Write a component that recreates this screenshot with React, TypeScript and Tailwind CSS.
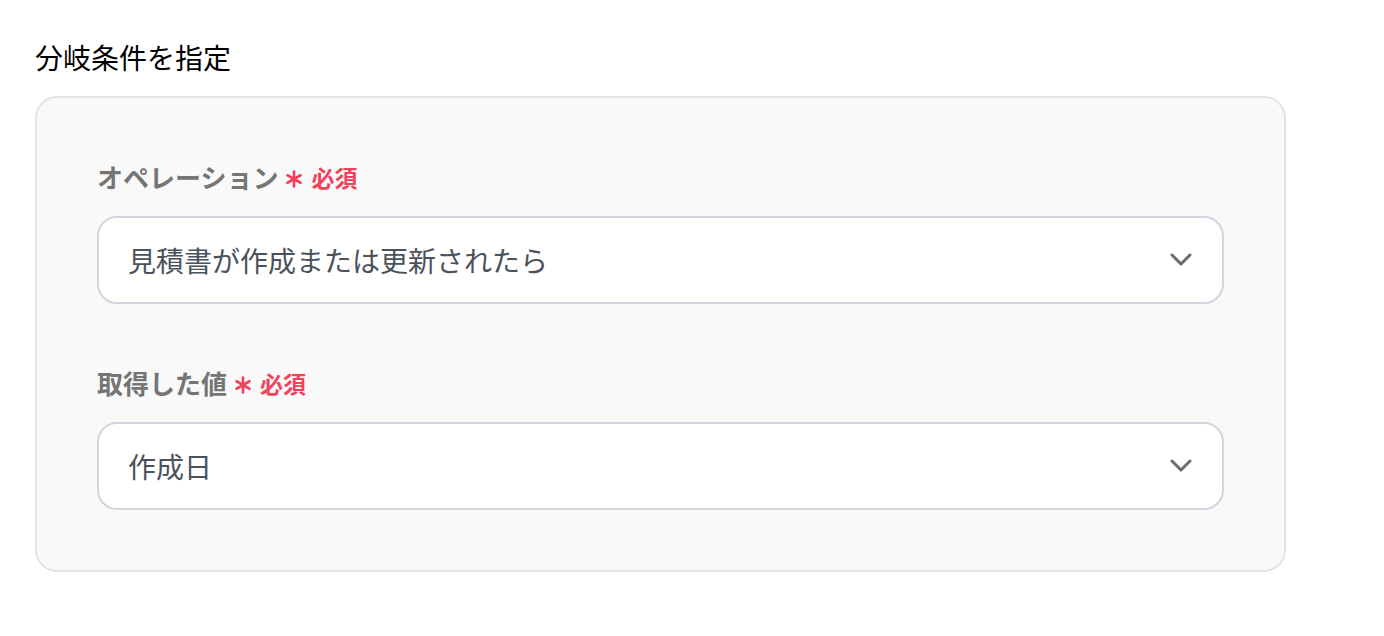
import React from "react";

const font = { fontFamily: '"Noto Sans CJK JP", "Noto Sans", sans-serif' };

function Asterisk() {
  return (
    <svg width="18" height="18" viewBox="0 0 18 18" className="mt-[3px]">
      <g stroke="#f2415b" strokeWidth="2.6" strokeLinecap="round">
        <line x1="9" y1="1.5" x2="9" y2="16.5" />
        <line x1="2.5" y1="5.25" x2="15.5" y2="12.75" />
        <line x1="2.5" y1="12.75" x2="15.5" y2="5.25" />
      </g>
    </svg>
  );
}

function Chevron() {
  return (
    <svg width="22" height="14" viewBox="0 0 22 14">
      <polyline
        points="2,2 11,11 20,2"
        fill="none"
        stroke="#6b6b6b"
        strokeWidth="3"
        strokeLinecap="round"
        strokeLinejoin="round"
      />
    </svg>
  );
}

function Field({ label, value }: { label: string; value: string }) {
  return (
    <div className="flex flex-col">
      <div className="flex items-center h-[28px]">
        <span className="text-[26px] font-bold text-[#757575] leading-none">{label}</span>
        <span className="ml-[7px] flex items-center">
          <Asterisk />
        </span>
        <span className="ml-[8px] text-[23px] font-bold text-[#f2415b] leading-none">必須</span>
      </div>
      <div className="mt-[25px] h-[88px] rounded-[20px] border-2 border-[#d0d5de] bg-white flex items-center justify-between pl-[29px] pr-[30px]">
        <span className="text-[28px] text-[#4b525c] leading-none">{value}</span>
        <Chevron />
      </div>
    </div>
  );
}

export default function App() {
  return (
    <div className="w-[1384px] h-[636px] bg-white" style={font}>
      <div className="pl-[35px] pt-[39px]">
        <div className="text-[28px] text-black leading-[36px]">分岐条件を指定</div>
        <div className="mt-[21px] w-[1251px] rounded-[22px] border-2 border-[#e3e3e3] bg-[#f9f9f9] px-[60px] pt-[65px] pb-[60px] flex flex-col gap-[65px]">
          <Field label="オペレーション" value="見積書が作成または更新されたら" />
          <Field label="取得した値" value="作成日" />
        </div>
      </div>
    </div>
  );
}
